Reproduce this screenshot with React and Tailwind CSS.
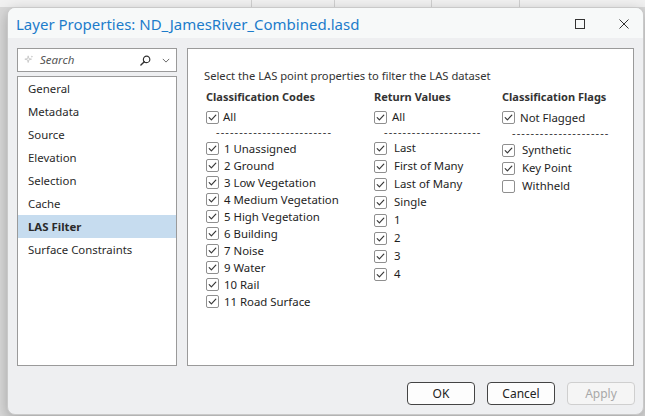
import React from 'react';

const font = { fontFamily: '"Segoe UI", "Noto Sans", "Open Sans", sans-serif' };

const navItems = ['General', 'Metadata', 'Source', 'Elevation', 'Selection', 'Cache', 'LAS Filter', 'Surface Constraints'];

const codes = ['1 Unassigned', '2 Ground', '3 Low Vegetation', '4 Medium Vegetation', '5 High Vegetation', '6 Building', '7 Noise', '9 Water', '10 Rail', '11 Road Surface'];
const returns = ['Last', 'First of Many', 'Last of Many', 'Single', '1', '2', '3', '4'];
const flags = [
  { label: 'Synthetic', on: true },
  { label: 'Key Point', on: true },
  { label: 'Withheld', on: false },
];

function Check({ on = true }) {
  return (
    <span className="w-[13px] h-[13px] shrink-0 rounded-[2px] border border-[#8f8f8f] bg-white flex items-center justify-center">
      {on && (
        <svg viewBox="0 0 11 11" className="w-[11px] h-[11px]">
          <path d="M2.2 5.6 L4.4 7.8 L8.8 3.2" stroke="#3a3a3a" strokeWidth="1.2" fill="none" strokeLinecap="round" strokeLinejoin="round" />
        </svg>
      )}
    </span>
  );
}

function Row({ label, on, h, gap }) {
  return (
    <div className={`flex items-center ${h} ${gap}`}>
      <Check on={on} />
      <span className="text-[11.4px] text-[#1e1e1e] whitespace-nowrap">{label}</span>
    </div>
  );
}

function Dashes({ text }) {
  return (
    <div className="h-[10px] flex items-center pl-[10px]">
      <span className="text-[11px] leading-[10px] tracking-[1.1px] text-[#333] whitespace-nowrap">{text}</span>
    </div>
  );
}

export default function App() {
  return (
    <div style={font} className="w-[645px] h-[416px] overflow-hidden relative bg-[#d9d9d9]">
      {/* background app behind the dialog */}
      <div className="h-[7px] bg-[#f1f1f1] flex">
        <div className="w-[252px] border-r border-[#d0d0d0]" />
        <div className="w-[83px] border-r border-[#d0d0d0]" />
        <div className="w-[97px] border-r border-[#d0d0d0]" />
        <div className="w-[88px] border-r border-[#d0d0d0]" />
      </div>

      <div className="absolute left-[7px] top-[7px] w-[637px] h-[408px] rounded-[8px] border border-[#c9c9c9] bg-[#eeeff1] shadow-[0_4px_14px_rgba(0,0,0,0.25)] overflow-hidden flex flex-col">
        {/* title bar */}
        <div className="h-[30px] bg-[#f7f9f9] flex items-center pl-[8px] pr-[14px] pt-[2px]">
          <span className="text-[15px] text-[#1c7ccb] flex-1">Layer Properties: ND_JamesRiver_Combined.lasd</span>
          <svg viewBox="0 0 10 10" className="w-[10px] h-[10px] mr-[34px]">
            <rect x="0.5" y="0.5" width="9" height="9" stroke="#333" fill="none" strokeWidth="1" />
          </svg>
          <svg viewBox="0 0 10 10" className="w-[10px] h-[10px]">
            <path d="M0.5 0.5 L9.5 9.5 M9.5 0.5 L0.5 9.5" stroke="#333" strokeWidth="1" />
          </svg>
        </div>

        {/* body */}
        <div className="flex gap-[10px] pl-[9px] pr-[8px] pt-[10px]">
          <div className="w-[160px] flex flex-col">
            <div className="h-[24px] border border-[#9a9a9a] bg-white flex items-center pl-[6px] pr-[6px]">
              <svg viewBox="0 0 12 12" className="w-[10px] h-[10px] mr-[6px]">
                <path d="M5 1 L5.8 4.2 L9 5 L5.8 5.8 L5 9 L4.2 5.8 L1 5 L4.2 4.2 Z" fill="none" stroke="#b8b8b8" strokeWidth="0.8" />
                <path d="M9.5 0.5 L9.9 1.6 L11 2 L9.9 2.4 L9.5 3.5 L9.1 2.4 L8 2 L9.1 1.6 Z" fill="#c4c4c4" />
              </svg>
              <span className="text-[11.5px] italic text-[#555] flex-1">Search</span>
              <svg viewBox="0 0 12 12" className="w-[11px] h-[11px] mr-[11px]">
                <circle cx="7.2" cy="4.8" r="3.5" stroke="#333" strokeWidth="1.3" fill="none" />
                <path d="M4.7 7.3 L1 11" stroke="#333" strokeWidth="1.5" strokeLinecap="round" />
              </svg>
              <svg viewBox="0 0 10 6" className="w-[8px] h-[5px]">
                <path d="M1 1 L5 5 L9 1" stroke="#555" strokeWidth="1.1" fill="none" />
              </svg>
            </div>
            <div className="mt-[4px] h-[290px] border border-[#9a9a9a] bg-white">
              {navItems.map((n) => (
                <div
                  key={n}
                  className={`h-[23px] flex items-center pl-[10px] text-[11.4px] text-[#2a2a2a] ${
                    n === 'LAS Filter' ? 'bg-[#c6dcef] font-bold' : ''
                  }`}
                >
                  {n}
                </div>
              ))}
            </div>
          </div>

          <div className="w-[447px] h-[318px] border border-[#9a9a9a] bg-white pt-[19px] pl-[16px]">
            <div className="h-[16px] flex items-center text-[11.2px] text-[#333]">
              Select the LAS point properties to filter the LAS dataset
            </div>
            <div className="flex mt-[3px] pl-[2px]">
              <div className="w-[168px] flex flex-col">
                <div className="h-[20px] flex items-center text-[11px] font-bold text-[#333]">Classification Codes</div>
                <Row label="All" on h="h-[20px]" gap="gap-[4px]" />
                <Dashes text="-------------------------" />
                <div className="mt-[3px] flex flex-col">
                  {codes.map((c) => (
                    <Row key={c} label={c} on h="h-[17px]" gap="gap-[5px]" />
                  ))}
                </div>
              </div>
              <div className="w-[128px] flex flex-col">
                <div className="h-[20px] flex items-center text-[11px] font-bold text-[#333]">Return Values</div>
                <Row label="All" on h="h-[20px]" gap="gap-[5px]" />
                <Dashes text="---------------------" />
                <div className="mt-[2px] flex flex-col">
                  {returns.map((r) => (
                    <Row key={r} label={r} on h="h-[18px]" gap="gap-[7px]" />
                  ))}
                </div>
              </div>
              <div className="flex flex-col">
                <div className="h-[20px] flex items-center text-[11px] font-bold text-[#333]">Classification Flags</div>
                <Row label="Not Flagged" on h="h-[21px]" gap="gap-[5px]" />
                <Dashes text="---------------------" />
                <div className="mt-[3px] flex flex-col">
                  {flags.map((f) => (
                    <Row key={f.label} label={f.label} on={f.on} h="h-[18px]" gap="gap-[7px]" />
                  ))}
                </div>
              </div>
            </div>
          </div>
        </div>

        {/* buttons */}
        <div className="flex justify-end gap-[12px] pr-[8px] mt-[16px]">
          <button className="w-[68px] h-[23px] rounded-[4px] border border-[#444] bg-[#fdfdfd] text-[12px] text-[#222]">OK</button>
          <button className="w-[68px] h-[23px] rounded-[4px] border border-[#444] bg-[#fdfdfd] text-[12px] text-[#222]">Cancel</button>
          <button className="w-[68px] h-[23px] rounded-[4px] border border-[#cfcfcf] bg-[#f5f5f5] text-[12px] text-[#a8a8a8]">Apply</button>
        </div>
      </div>
    </div>
  );
}
